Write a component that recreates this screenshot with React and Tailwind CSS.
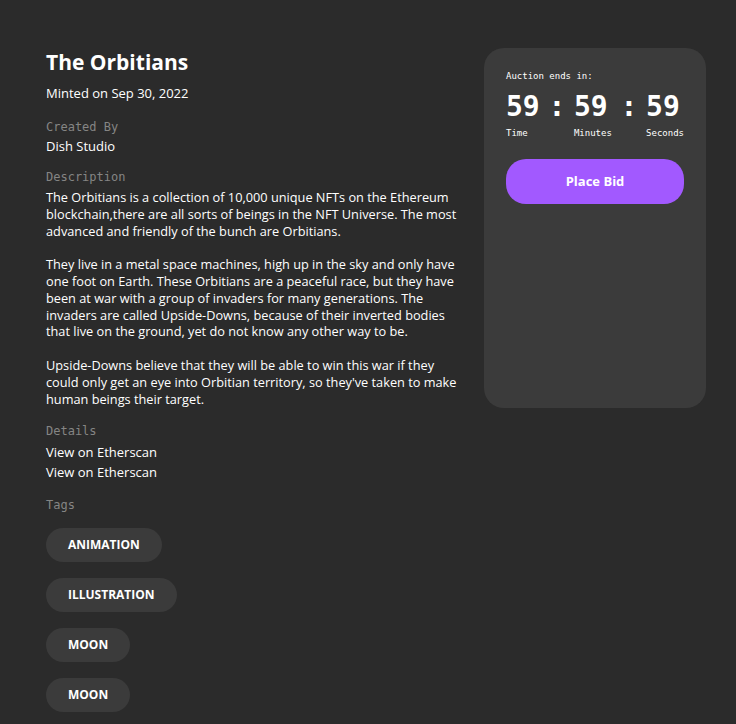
import React from 'react';

const sans = { fontFamily: '"Open Sans", "Liberation Sans", sans-serif' };
const mono = { fontFamily: '"DejaVu Sans Mono", "Liberation Mono", monospace' };

const Label = ({ children }) => (
    <div className="text-[12px] text-[#858584] leading-[18px]" style={mono}>
        {children}
    </div>
);

const paragraphs = [
    [
        'The Orbitians is a collection of 10,000 unique NFTs on the Ethereum',
        'blockchain,there are all sorts of beings in the NFT Universe. The most',
        'advanced and friendly of the bunch are Orbitians.',
    ],
    [
        'They live in a metal space machines, high up in the sky and only have',
        'one foot on Earth. These Orbitians are a peaceful race, but they have',
        'been at war with a group of invaders for many generations. The',
        'invaders are called Upside-Downs, because of their inverted bodies',
        'that live on the ground, yet do not know any other way to be.',
    ],
    [
        'Upside-Downs believe that they will be able to win this war if they',
        "could only get an eye into Orbitian territory, so they've taken to make",
        'human beings their target.',
    ],
];

const App = () => {
    const tags = ['Animation', 'Illustration', 'Moon', 'Moon'];

    return (
        <div className="min-h-[724px] bg-[#2b2b2b] text-white" style={sans}>
            <div className="flex pl-[46px] pt-[48px]">
                <div className="w-[420px]">
                    <h1 className="text-[21px] font-bold leading-[28px]">The Orbitians</h1>
                    <p className="mt-[8px] text-[13px] leading-[18px]">Minted on Sep 30, 2022</p>

                    <div className="mt-[16px]">
                        <Label>Created By</Label>
                        <p className="mt-[1px] text-[13px] leading-[18px]">Dish Studio</p>
                    </div>

                    <div className="mt-[13px]">
                        <Label>Description</Label>
                        <div className="mt-[3px] text-[12.75px] leading-[16.8px] flex flex-col gap-[16.8px]">
                            {paragraphs.map((lines, i) => (
                                <p key={i}>
                                    {lines.map((line) => (
                                        <span key={line} className="block whitespace-nowrap">
                                            {line}
                                        </span>
                                    ))}
                                </p>
                            ))}
                        </div>
                    </div>

                    <div className="mt-[15px]">
                        <Label>Details</Label>
                        <p className="mt-[2px] text-[13px] leading-[20px]">View on Etherscan</p>
                        <p className="text-[13px] leading-[20px]">View on Etherscan</p>
                    </div>

                    <div className="mt-[14px]">
                        <Label>Tags</Label>
                        <div className="mt-[14px] flex flex-col items-start gap-[16px]">
                            {tags.map((tag, i) => (
                                <span
                                    key={i}
                                    className="h-[34px] flex items-center px-[22px] rounded-[20px] bg-[#3b3b3b] text-[12px] font-bold uppercase"
                                >
                                    {tag}
                                </span>
                            ))}
                        </div>
                    </div>
                </div>

                <div className="ml-[18px] w-[222px] h-[360px] rounded-[20px] bg-[#3b3b3b] px-[22px] pt-[22px]">
                    <div className="text-[9px] leading-[12px]" style={mono}>Auction ends in:</div>
                    <div className="mt-[9px] flex justify-between items-start" style={mono}>
                        <div>
                            <div className="text-[28px] font-bold leading-[32px]">59</div>
                            <div className="mt-[4px] text-[9px] leading-[12px]">Time</div>
                        </div>
                        <div className="text-[28px] font-bold leading-[32px]">:</div>
                        <div>
                            <div className="text-[28px] font-bold leading-[32px]">59</div>
                            <div className="mt-[4px] text-[9px] leading-[12px]">Minutes</div>
                        </div>
                        <div className="text-[28px] font-bold leading-[32px]">:</div>
                        <div>
                            <div className="text-[28px] font-bold leading-[32px]">59</div>
                            <div className="mt-[4px] text-[9px] leading-[12px]">Seconds</div>
                        </div>
                    </div>
                    <button className="mt-[20px] w-full h-[45px] rounded-[20px] bg-[#a259ff] text-[13px] font-bold">
                        Place Bid
                    </button>
                </div>
            </div>
        </div>
    );
};

export default App;
